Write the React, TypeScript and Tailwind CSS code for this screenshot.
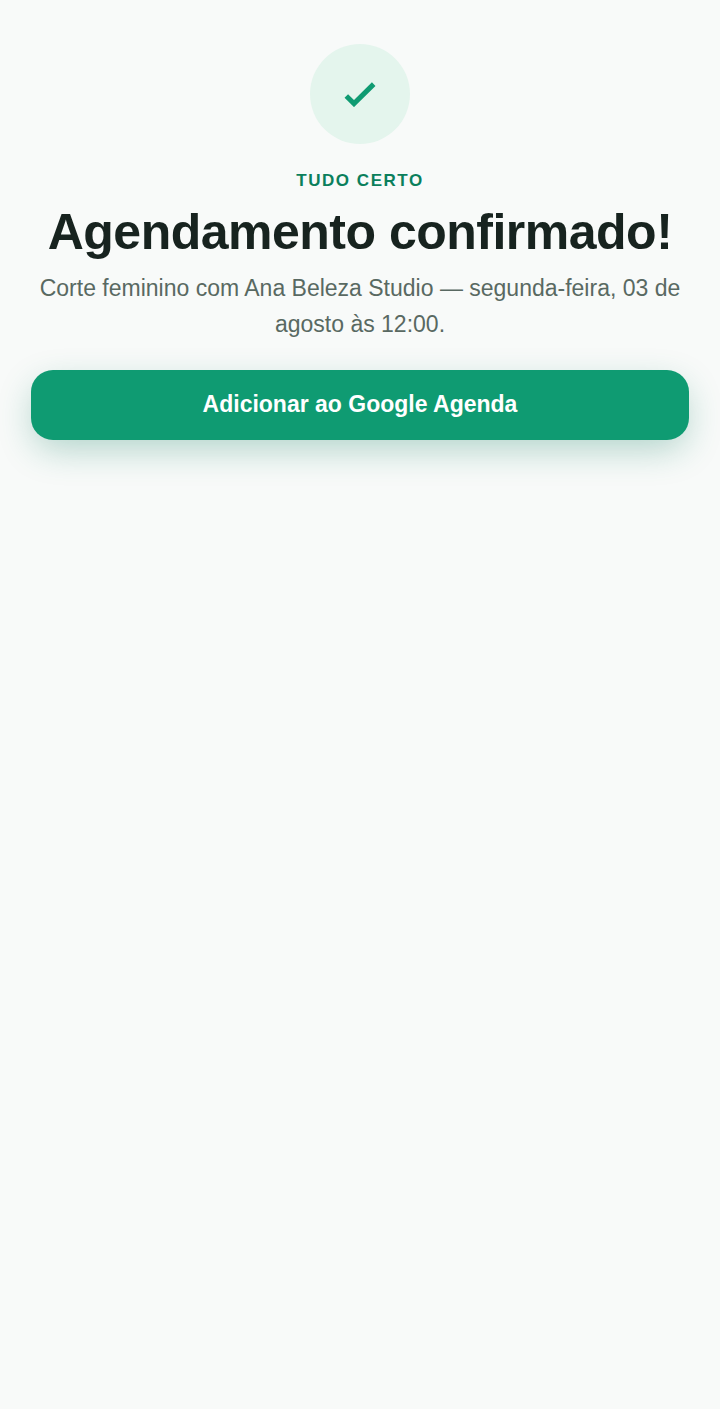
export default function App() {
  return (
    <main className="flex min-h-screen flex-col items-center bg-[#f8faf9] px-[31px] pt-11 pb-8 text-center font-['Liberation_Sans',Arial,sans-serif]">
      <div className="flex size-[100px] items-center justify-center rounded-full bg-[#e4f5ed]">
        <svg viewBox="0 0 32 26" className="h-[26px] w-8" fill="none" aria-hidden="true">
          <path d="M2.3 14.9L10 22.6L29.7 3.1" stroke="#0f9b72" strokeWidth="5" />
        </svg>
      </div>
      <p className="mt-6 text-[17px] leading-[26px] font-bold tracking-[0.09em] text-[#0b7f5c] uppercase">
        Tudo certo
      </p>
      <h1 className="mt-2 text-[50px] leading-[60px] font-bold tracking-[-0.01em] text-[#17231f]">
        Agendamento confirmado!
      </h1>
      <p className="mt-2 text-[23px] leading-9 text-[#596962]">
        Corte feminino com Ana Beleza Studio — segunda-feira, 03 de agosto às 12:00.
      </p>
      <button
        type="button"
        className="mt-7 w-full cursor-pointer rounded-[22px] bg-[#0f9b72] pt-4 pb-[18px] text-[23px] leading-9 font-bold text-white shadow-[0_12px_36px_-4px_rgba(15,125,95,0.32)]"
      >
        Adicionar ao Google Agenda
      </button>
    </main>
  );
}
